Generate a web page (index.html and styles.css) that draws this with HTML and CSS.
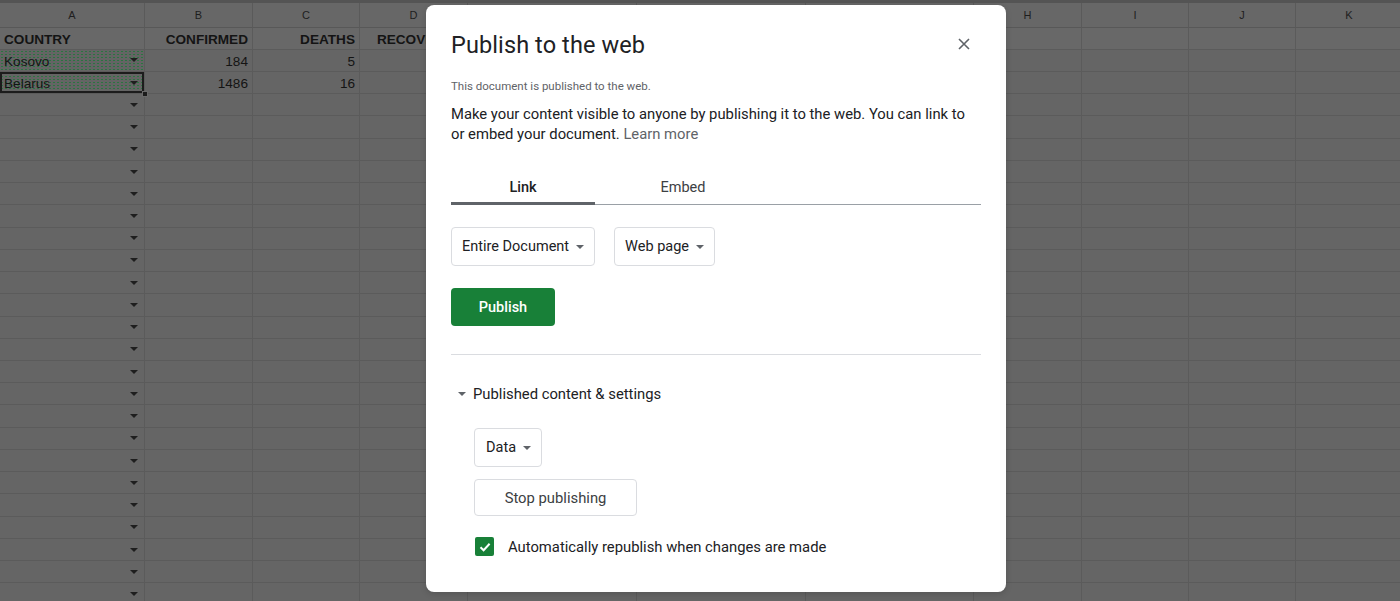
FILE: index.html
```html
<!DOCTYPE html>
<html lang="en">
<head>
<meta charset="utf-8">
<title>Publish to the web</title>
<link rel="stylesheet" href="styles.css">
</head>
<body>
<div class="sheet">
  <div class="topstrip"></div>
  <div class="grid" id="grid">
    <div class="ch">A</div><div class="ch">B</div><div class="ch">C</div><div class="ch">D</div><div class="ch">E</div><div class="ch">F</div><div class="ch">G</div><div class="ch">H</div><div class="ch">I</div><div class="ch">J</div><div class="ch">K</div>

    <div class="c hd">COUNTRY</div><div class="c hd r">CONFIRMED</div><div class="c hd r">DEATHS</div><div class="c hd r">RECOVERED</div><div class="c hd"></div><div class="c hd"></div><div class="c hd"></div><div class="c hd"></div><div class="c hd"></div><div class="c hd"></div><div class="c hd"></div>

    <div class="c dv">Kosovo<span class="arr"></span></div><div class="c r">184</div><div class="c r">5</div><div class="c"></div><div class="c"></div><div class="c"></div><div class="c"></div><div class="c"></div><div class="c"></div><div class="c"></div><div class="c"></div>

    <div class="c dv sel">Belarus<span class="arr"></span><span class="handle"></span></div><div class="c r">1486</div><div class="c r">16</div><div class="c"></div><div class="c"></div><div class="c"></div><div class="c"></div><div class="c"></div><div class="c"></div><div class="c"></div><div class="c"></div>
  </div>
</div>

<div class="dialog">
  <div class="dlg-head">
    <h1 class="title">Publish to the web</h1>
    <button class="close" aria-label="Close">
      <svg width="12" height="12" viewBox="0 0 12 12"><path d="M1 1 L11 11 M11 1 L1 11" stroke="#5f6368" stroke-width="1.6" fill="none"/></svg>
    </button>
  </div>
  <p class="status">This document is published to the web.</p>
  <p class="desc">Make your content visible to anyone by publishing it to the web. You can link to or embed your document. <a class="learn">Learn more</a></p>

  <div class="tabs">
    <div class="tab active">Link</div>
    <div class="tab second">Embed</div>
  </div>

  <div class="selects">
    <div class="dd">Entire Document<span class="caret"></span></div>
    <div class="dd">Web page<span class="caret"></span></div>
  </div>

  <button class="publish">Publish</button>

  <div class="divider"></div>

  <div class="section-head"><span class="caret sm"></span>Published content &amp; settings</div>

  <div class="section-body">
    <div class="dd small">Data<span class="caret"></span></div>
    <button class="stop">Stop publishing</button>
    <label class="check">
      <span class="box"><svg width="14" height="14" viewBox="0 0 14 14"><path d="M2.5 7.2 L5.6 10.2 L11.6 3.8" stroke="#fff" stroke-width="2" fill="none"/></svg></span>
      Automatically republish when changes are made
    </label>
  </div>
</div>
<script src="script.js"></script>
</body>
</html>
```

FILE: styles.css
```css
* { box-sizing: border-box; }
html, body { margin: 0; padding: 0; }
body {
  width: 1400px;
  height: 601px;
  overflow: hidden;
  background: #656565;
  font-family: "Liberation Sans", Arial, sans-serif;
  position: relative;
}

.sheet { width: 1400px; height: 601px; overflow: hidden; }
.topstrip { height: 3px; background: #545454; }

.grid {
  display: grid;
  grid-template-columns: 145px 108px 107px 108px 169px 169px 168px 108px 107px 107px 107px;
  grid-template-rows: 24.5px;
  grid-auto-rows: 22.24px;
  width: 1403px;
}

.ch {
  background: #676767;
  border-right: 1px solid #5a5a5a;
  border-bottom: 1px solid #585858;
  color: #1e1e1e;
  font-size: 11px;
  display: flex;
  align-items: center;
  justify-content: center;
}

.c {
  border-right: 1px solid #5b5b5b;
  border-bottom: 1px solid #5b5b5b;
  font-size: 13.6px;
  color: #141414;
  padding: 2px 4px 0;
  display: flex;
  align-items: center;
  white-space: nowrap;
  overflow: hidden;
  position: relative;
}
.c.r { justify-content: flex-end; }
.c.hd { font-weight: bold; background: #686868; padding-top: 2px; }

.c.dv {
  background-color: #646464;
  background-image: radial-gradient(circle, #2a7540 0.5px, transparent 0.75px);
  background-size: 4px 3px;
}
.c.sel {
  box-shadow: inset 0 0 0 2px #1c1c1c;
  overflow: visible;
}
.arr {
  position: absolute;
  right: 6px;
  top: 50%;
  margin-top: -2px;
  width: 0; height: 0;
  border-left: 4px solid transparent;
  border-right: 4px solid transparent;
  border-top: 4px solid #1e1e1e;
}
.handle {
  position: absolute;
  right: -4px;
  bottom: -4px;
  width: 6px; height: 6px;
  background: #1c1c1c;
  border: 1px solid #6a6a6a;
  z-index: 2;
}

/* Dialog */
.dialog {
  position: absolute;
  left: 426px;
  top: 5px;
  width: 580px;
  height: 587px;
  background: #fff;
  border-radius: 8px;
  box-shadow: 0 2px 6px rgba(0,0,0,0.15);
  padding: 0 25px 0 25px;
  font-family: Roboto, "Noto Sans", Arial, sans-serif;
  color: #202124;
}
.dlg-head {
  display: flex;
  justify-content: space-between;
  align-items: center;
  padding-top: 24px;
  height: 56px;
}
.title {
  margin: 0;
  font-weight: 400;
  font-size: 23.5px;
  line-height: 30px;
  color: #202124;
  letter-spacing: 0.1px;
}
.close {
  border: 0;
  background: transparent;
  padding: 0;
  width: 12px;
  height: 12px;
  margin-right: 11px;
  margin-top: -2px;
  display: flex;
}
.status {
  margin: 17px 0 0;
  font-size: 11.5px;
  line-height: 16px;
  color: #5f6368;
}
.desc {
  margin: 10px 0 0;
  font-size: 14.8px;
  line-height: 20px;
  color: #202124;
}
.learn { color: #5f6368; }

.tabs {
  display: flex;
  margin-top: 26px;
  width: 530px;
  border-bottom: 1px solid #9aa0a6;
  height: 35px;
}
.tab {
  font-size: 14.5px;
  color: #3c4043;
  display: flex;
  align-items: center;
  justify-content: center;
  height: 34px;
  padding-top: 1px;
}
.tab.active {
  width: 144px;
  font-weight: 500;
  color: #202124;
  border-bottom: 3px solid #5f6368;
  margin-bottom: -1px;
  height: 35px;
  padding-top: 2px;
}
.tab.second { width: 176px; }

.selects {
  display: flex;
  gap: 19px;
  margin-top: 22px;
}
.dd {
  height: 39px;
  border: 1px solid #dadce0;
  border-radius: 4px;
  display: inline-flex;
  align-items: center;
  padding: 0 10px 0 10px;
  font-size: 14.5px;
  color: #202124;
}
.caret {
  display: inline-block;
  width: 0; height: 0;
  border-left: 4.5px solid transparent;
  border-right: 4.5px solid transparent;
  border-top: 4.5px solid #5f6368;
  margin-left: 7px;
}
.caret.sm {
  margin-left: 7px;
  margin-right: 7px;
  border-left-width: 4px;
  border-right-width: 4px;
  border-top-width: 4px;
}

.publish {
  display: block;
  margin-top: 22px;
  width: 104px;
  height: 38px;
  background: #188038;
  border: 0;
  border-radius: 4px;
  color: #fff;
  font-family: Roboto, Arial, sans-serif;
  font-weight: 500;
  font-size: 14.5px;
}

.divider {
  margin-top: 28px;
  width: 530px;
  border-top: 1px solid #dadce0;
}

.section-head {
  display: flex;
  align-items: center;
  margin-top: 28px;
  font-size: 14.8px;
  color: #202124;
  height: 22px;
}

.section-body {
  padding-left: 23px;
  margin-top: 23px;
  display: flex;
  flex-direction: column;
  align-items: flex-start;
}
.dd.small { padding: 0 10px 0 11px; height: 39px; }

.stop {
  margin-top: 12px;
  width: 163px;
  height: 37px;
  background: #fff;
  border: 1px solid #dadce0;
  border-radius: 4px;
  font-family: Roboto, Arial, sans-serif;
  font-weight: 400;
  font-size: 14.8px;
  color: #3c4043;
}

.check {
  display: flex;
  align-items: center;
  margin-top: 21px;
  font-size: 14.8px;
  color: #202124;
}
.box {
  width: 19px;
  height: 19px;
  background: #188038;
  border-radius: 2px;
  display: flex;
  align-items: center;
  justify-content: center;
  margin-left: 1px;
  margin-right: 14px;
}
```

FILE: script.js
```js
(function () {
  var grid = document.getElementById('grid');
  for (var r = 0; r < 23; r++) {
    for (var c = 0; c < 11; c++) {
      var d = document.createElement('div');
      d.className = 'c';
      if (c === 0) {
        var a = document.createElement('span');
        a.className = 'arr';
        d.appendChild(a);
      }
      grid.appendChild(d);
    }
  }
})();
```
